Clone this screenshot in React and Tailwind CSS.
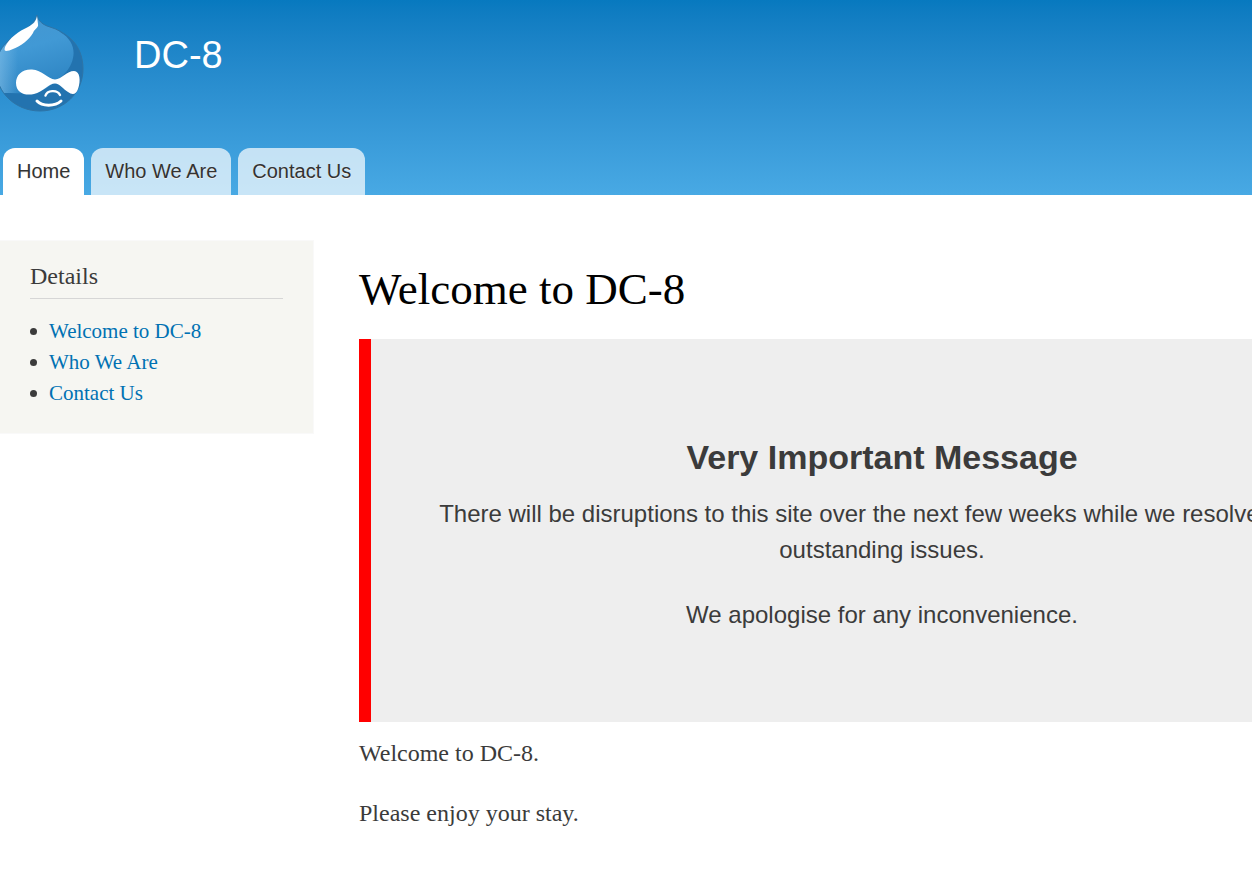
import React from 'react';

const tabs = [
    { label: 'Home', href: '#home' },
    { label: 'Who We Are', href: '#who-we-are' },
    { label: 'Contact Us', href: '#contact-us' },
];

const details = [
    { label: 'Welcome to DC-8', href: '#home' },
    { label: 'Who We Are', href: '#who-we-are' },
    { label: 'Contact Us', href: '#contact-us' },
];

function Logo() {
    return (
        <svg viewBox="0 0 84 98" className="block w-[84px] h-[98px]" aria-hidden="true">
            <defs>
                <linearGradient id="drop" x1="0" y1="0" x2="0.3" y2="1">
                    <stop offset="0" stopColor="#4596d0" />
                    <stop offset="0.5" stopColor="#4199d5" />
                    <stop offset="1" stopColor="#2f86c4" />
                </linearGradient>
                <linearGradient id="edge" x1="0" y1="0" x2="1" y2="0">
                    <stop offset="0" stopColor="#8cc4ea" stopOpacity="0.5" />
                    <stop offset="1" stopColor="#8cc4ea" stopOpacity="0" />
                </linearGradient>
                <clipPath id="dropClip">
                    <path d="M37 0C38 6 43 10 50 12C57 14 64 18 70 23C79 31 83 42 83 54C83 78 64 96 40 96C16 96-4 78-4 54C-4 42 0 34 7 27C16 18 34 13 37 0Z" />
                </clipPath>
            </defs>
            <g clipPath="url(#dropClip)">
                <rect x="-5" width="90" height="98" fill="#2373af" />
                <path d="M-5-1H50L60 17C72 24 75 34 73 43C70 58 56 66 48 72C38 80 18 78-5 78Z" fill="url(#drop)" />
                <rect y="30" width="18" height="48" fill="url(#edge)" />
            </g>
            <path d="M37 0C38 6 43 10 50 12C57 14 64 18 70 23C79 31 83 42 83 54C83 78 64 96 40 96C16 96-4 78-4 54C-4 42 0 34 7 27C16 18 34 13 37 0Z" fill="none" stroke="#2e74a6" strokeWidth="1" />
            <path d="M37 1C36 7 33 9 28 12C19 16 9 23 5 32C3 38 8 36 13 34C21 31 29 25 33 18C34 14 39 13 38 9Z" fill="#ffffff" />
            {/* eyes */}
            <path d="M32 54.500C42 55 48 64 55 64.500C62 64 67 56 74 56C80 56 81 66 78 74C76 80 72 80 68 77C63 74 60 68.500 55 68.500C49 68.500 43 77 34 79C25 81 16 78 16 68C16 60 22 54 32 54.500Z" fill="#ffffff" />
            <path d="M45.500 80.500C47 75.500 57 74 60 80" fill="none" stroke="#ffffff" strokeWidth="2.400" strokeLinecap="round" />
            <path d="M37 86C42 91.500 55 91.500 61 86" fill="none" stroke="#ffffff" strokeWidth="3" strokeLinecap="round" />
        </svg>
    );
}

export default function App() {
    return (
        <div className="min-h-screen overflow-x-hidden bg-white text-[#3b3b3b] font-['Liberation_Serif',serif]">
            <header className="bg-linear-to-b from-[#0779bf] to-[#48a9e4] font-['Liberation_Sans',sans-serif]">
                <div className="flex h-[148px] items-start gap-[50px] pt-[15px]">
                    <a href="#home" aria-label="Home">
                        <Logo />
                    </a>
                    <a href="#home" className="mt-[18px] text-[38px] leading-[44px] text-white">DC-8</a>
                </div>

                <nav className="flex gap-[7px] pl-[3px]">
                    {tabs.map((tab, index) => (
                        <a
                            key={tab.label}
                            href={tab.href}
                            className={`h-[47px] rounded-t-[12px] px-[14px] text-[20px] leading-[46px] whitespace-nowrap text-[#333333] text-shadow-[0_1px_0_#eeeeee] ${
                                index === 0 ? 'bg-white' : 'bg-white/70'
                            }`}
                        >
                            {tab.label}
                        </a>
                    ))}
                </nav>
            </header>

            <div className="flex items-start gap-[45px] pt-[45px] pb-12">
                <aside className="w-[314px] shrink-0 border border-l-0 border-[#f9f9f9] bg-[#f6f6f2] px-[30px] pt-[17px] pb-6">
                    <h2 className="border-b border-[#d6d6d6] pb-1 text-[24px] leading-[36px]">Details</h2>
                    <ul className="mt-[17px]">
                        {details.map((item) => (
                            <li key={item.label} className="flex items-center gap-3 text-[21px] leading-[31px]">
                                <span className="size-[7px] rounded-full bg-[#3b3b3b]"></span>
                                <a href={item.href} className="text-[#0071b3]">{item.label}</a>
                            </li>
                        ))}
                    </ul>
                </aside>

                {/* The notice keeps its reading width on narrow windows */}
                <main className="min-w-[1034px] flex-1 pt-[19px]">
                    <h1 className="mb-5 text-[45px] leading-[60px] text-black">Welcome to DC-8</h1>

                    <section className="border-l-[12px] border-[#ff0000] bg-[#eeeeee] px-[60px] pt-[90px] pb-[89px] text-center font-['Liberation_Sans',sans-serif] text-[24px] leading-[36px]">
                        <h2 className="mb-[11px] text-[34px] leading-[56px] font-bold">Very Important Message</h2>
                        <p className="mb-[29px]">
                            There will be disruptions to this site over the next few weeks while we resolve these outstanding issues.
                        </p>
                        <p>We apologise for any inconvenience.</p>
                    </section>

                    <div className="mt-[13px] space-y-6 text-[24px] leading-[36px]">
                        <p>Welcome to DC-8.</p>
                        <p>Please enjoy your stay.</p>
                    </div>
                </main>
            </div>
        </div>
    );
}
